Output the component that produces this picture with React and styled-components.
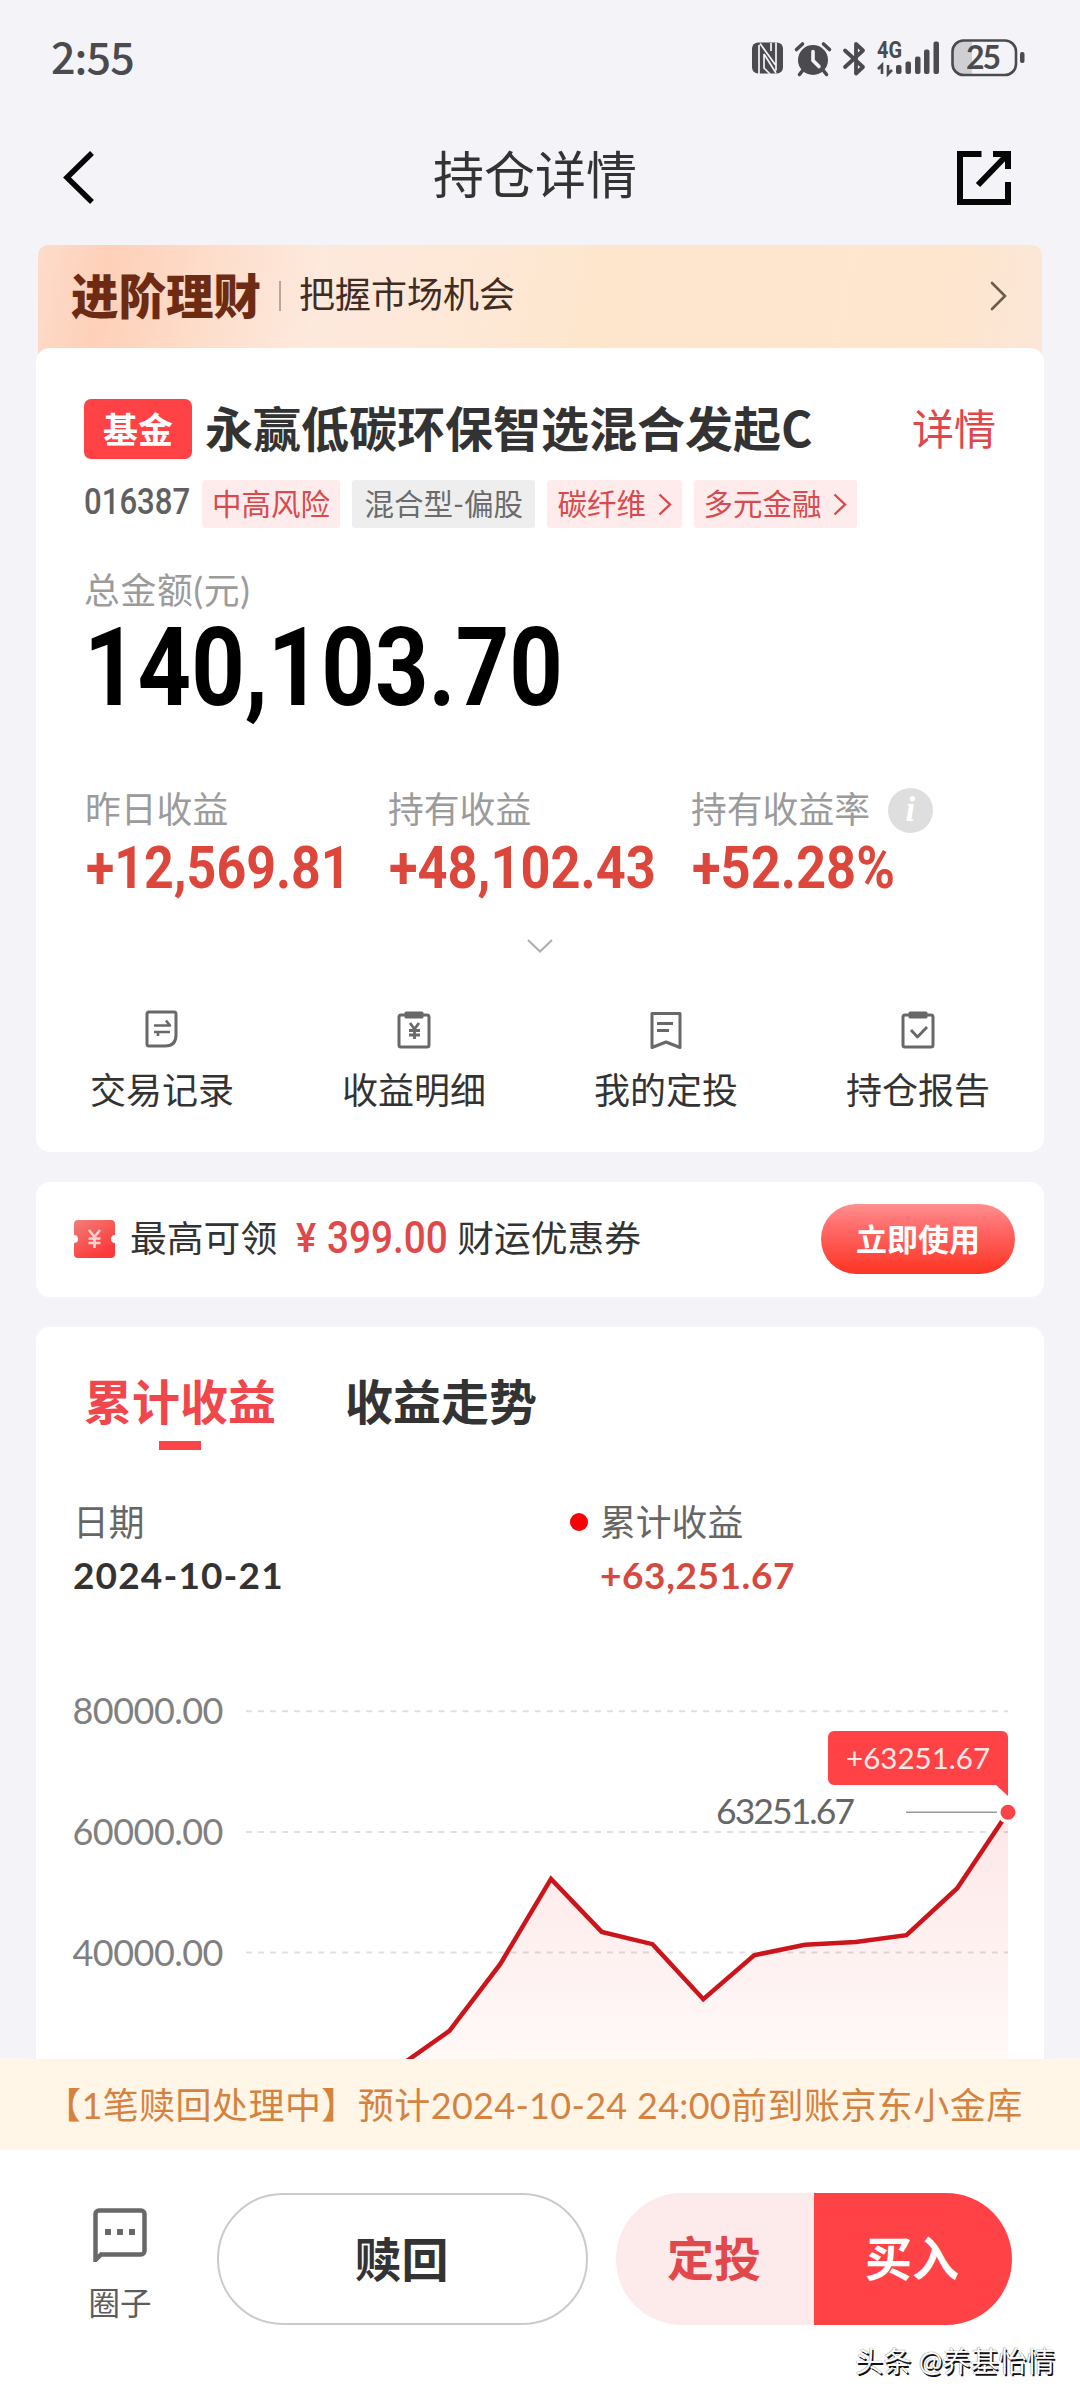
import React from "react";
import styled, { createGlobalStyle } from "styled-components";

const GlobalStyle = createGlobalStyle`
    * {
        box-sizing: border-box;
    }
    body {
        margin: 0;
        background-color: #f4f4f8;
        font-family: Lato, "Noto Sans CJK SC", sans-serif;
        color: #333;
    }
    svg {
        display: block;
        flex-shrink: 0;
    }
`

const Page = styled.main`
    display: flex;
    flex-direction: column;
    width: 1080px;
    height: 2400px;
    overflow: hidden;
`

const StatusBar = styled.div`
    display: flex;
    align-items: center;
    justify-content: space-between;
    height: 116px;
    padding: 0 55px 0 51px;
`

const Clock = styled.span`
    padding-bottom: 6px;
    font-family: "Noto Sans CJK SC", sans-serif;
    font-size: 43px;
    font-weight: 500;
    line-height: 50px;
    letter-spacing: -0.9px;
    color: #4b4b4f;
`

const NavBar = styled.header`
    display: flex;
    align-items: center;
    justify-content: space-between;
    height: 124px;
    margin-bottom: 5px;
    padding: 0 69px 0 63px;
`

const NavTitle = styled.h1`
    margin: 0 0 7px;
    font-size: 51px;
    font-weight: 400;
    line-height: 60px;
`

const Banner = styled.section`
    display: flex;
    align-items: center;
    height: 115px;
    margin: 0 38px -12px;
    padding: 0 35px 14px 33px;
    border-radius: 10px 10px 0 0;
    background: linear-gradient(100deg, #fddccb 0%, #fed0b8 7%, #fdddca 17%, #fde9dd 28%, #fde8d6 44%, #fee6cd 55%, #fde5cf 92%, #fbe7d8 100%);
`

const BannerLogo = styled.strong`
    font-size: 47.5px;
    font-weight: 900;
    line-height: 60px;
    color: #6d2b14;
`

const BannerDivider = styled.i`
    width: 2px;
    height: 30px;
    margin: 0 18px 0 18px;
    background-color: #bda496;
`

const BannerText = styled.span`
    flex: 1;
    padding-bottom: 3px;
    font-size: 36px;
    line-height: 50px;
    color: #3f2d24;
`

const Card = styled.section`
    flex-shrink: 0;
    margin: 0 36px;
    border-radius: 14px;
    background-color: #fff;
`

const FundCard = styled(Card)`
    height: 804px;
    padding-top: 51px;
`

const FundBody = styled.div`
    padding: 0 48px;
`

const TitleRow = styled.div`
    display: flex;
    align-items: center;
    height: 60px;
`

const FundBadge = styled.span`
    width: 108px;
    height: 60px;
    margin-right: 13px;
    border-radius: 7px;
    background-color: #ff4245;
    font-size: 35px;
    font-weight: 700;
    line-height: 60px;
    text-align: center;
    color: #fff;
`

const FundName = styled.h2`
    flex: 1;
    margin: 0;
    font-family: "Noto Sans CJK SC", sans-serif;
    font-size: 48px;
    font-weight: 700;
    line-height: 56px;
    padding-bottom: 7px;
`

const DetailLink = styled.a`
    font-size: 42px;
    line-height: 50px;
    color: #e0474c;
`

const TagRow = styled.div`
    display: flex;
    gap: 12px;
    margin-top: 21px;
`

/* DIN-like figures: Roboto squeezed horizontally inside a fixed width box */
const Figure = styled.span`
    display: block;
    width: ${(props) => props.$width}px;
    font-family: Roboto, sans-serif;
    font-size: ${(props) => props.$size}px;
    font-weight: ${(props) => props.$weight || 700};
    line-height: ${(props) => props.$line}px;
    color: ${(props) => props.$color};
    white-space: nowrap;
    transform: scaleX(${(props) => props.$squeeze});
    transform-origin: left center;
`

const StatFigure = styled(Figure)`
    margin-left: 2px;
`

const Tag = styled.span`
    display: flex;
    align-items: center;
    gap: 11.5px;
    height: 48px;
    padding: 0 ${(props) => (props.$gray ? 12.5 : 10)}px;
    border-radius: 3px;
    background-color: ${(props) => (props.$gray ? "#eeeeee" : "#feecec")};
    font-size: 29.5px;
    line-height: 45px;
    color: ${(props) => (props.$gray ? "#6b6b6b" : "#d9494d")};
`

const TagText = styled.span`
    padding-bottom: 2px;
`

const Label = styled.span`
    font-size: 35.8px;
    line-height: ${(props) => props.$line || 46}px;
    letter-spacing: ${(props) => props.$spacing || 0}px;
    color: ${(props) => props.$color || "#9b9b9b"};
`

const TotalLabel = styled.div`
    display: flex;
    margin: 38px 0 2px;
`

const Stats = styled.div`
    display: flex;
    margin-top: 69px;
`

const Stat = styled.div`
    width: 303px;
    flex-shrink: 0;
`

const StatHead = styled.div`
    display: flex;
    align-items: center;
    gap: 18px;
    height: 46px;
    margin-bottom: 5px;
    padding-left: 1px;
`

const Info = styled.span`
    width: 45px;
    height: 45px;
    border-radius: 50%;
    background-color: #dedede;
    font-family: "Liberation Serif", serif;
    font-size: 35px;
    font-style: italic;
    font-weight: 700;
    line-height: 43px;
    text-align: center;
    color: #fff;
`

const Expand = styled.div`
    display: flex;
    justify-content: center;
    margin: 41px 0 57px;
`

const Shortcuts = styled.nav`
    display: flex;
`

const Shortcut = styled.a`
    display: flex;
    flex: 1;
    flex-direction: column;
    align-items: center;
    gap: 18px;
    font-size: 36px;
    line-height: 46px;
`

const CouponCard = styled(Card)`
    display: flex;
    align-items: center;
    height: 115px;
    margin-top: 30px;
    padding: 0 29px 1px 38px;
    font-size: 36.8px;
    line-height: 50px;
`

const CouponText = styled.span`
    margin-left: ${(props) => props.$left}px;
    padding-bottom: 2px;
`

const CouponAmount = styled.div`
    display: flex;
    gap: 8px;
    margin-left: 19px;
`

const UseButton = styled.button`
    width: 194px;
    height: 70px;
    margin-left: auto;
    padding: 0;
    border: none;
    border-radius: 35px;
    background: linear-gradient(#ff8f90 0%, #ff6461 40%, #fd3b2c 90%, #f8382b 100%);
    font-family: inherit;
    font-size: 31px;
    font-weight: 700;
    line-height: 66px;
    color: #fff;
`

const ChartCard = styled(Card)`
    flex: 1 0 0;
    min-height: 0;
    margin-top: 30px;
    padding-top: 45px;
    border-radius: 14px 14px 0 0;
    overflow: hidden;
`

const Tabs = styled.div`
    display: flex;
    gap: 69px;
    padding-left: 48px;
`

const Tab = styled.div`
    display: flex;
    flex-direction: column;
    align-items: center;
    height: 78px;
    font-size: 48px;
    font-weight: 700;
    line-height: 60px;
    color: ${(props) => (props.$active ? "#ef474b" : "#333")};

    &::after {
        content: "";
        width: 42px;
        height: 9px;
        margin-top: 9px;
        background-color: ${(props) => (props.$active ? "#fb4548" : "transparent")};
    }
`

const Legend = styled.div`
    display: flex;
    margin-top: 50px;
    padding-left: 37px;
`

const LegendItem = styled.div`
    display: flex;
    flex-direction: column;
    gap: 7px;
    width: ${(props) => props.$width}px;
`

const LegendDot = styled.i`
    width: 18px;
    height: 18px;
    margin: 13px 12px 0 0;
    border-radius: 50%;
    background-color: #f90207;
`

const LegendValue = styled.strong`
    font-size: 37px;
    line-height: 43px;
    letter-spacing: ${(props) => props.$spacing}px;
    color: ${(props) => props.$color || "#333"};
`

const ChartArea = styled.svg`
    margin-top: 44px;
`

const Notice = styled.div`
    flex-shrink: 0;
    height: 91px;
    padding-left: 45px;
    background-color: #fff6e8;
    font-size: 36px;
    line-height: 93px;
    letter-spacing: 0.45px;
    white-space: nowrap;
    color: #d6823f;
`

const NoticeNumber = styled.span`
    letter-spacing: 0.3px;
`

const BottomBar = styled.footer`
    display: flex;
    flex-direction: column;
    flex-shrink: 0;
    height: 250px;
    background-color: #fff;
`

const Actions = styled.div`
    display: flex;
    padding: 43px 68px 0 66px;
`

const Circle = styled.a`
    display: flex;
    flex-direction: column;
    align-items: center;
    gap: 21px;
    width: 108px;
    margin-right: 43px;
    padding-top: 15px;
    font-size: 31.5px;
    line-height: 40px;
    color: #5c5c5c;
`

const Action = styled.button`
    width: ${(props) => props.$width}px;
    height: 132px;
    padding: 0 2px ${(props) => (props.$outline ? 5 : 8)}px 0;
    border: ${(props) => (props.$outline ? "2px solid #cbcbcb" : "none")};
    border-radius: ${(props) => props.$radius};
    background-color: ${(props) => props.$bg};
    font-family: inherit;
    font-size: 47px;
    font-weight: 700;
    color: ${(props) => props.$color};
`

const TradeGroup = styled.div`
    display: flex;
    margin-left: auto;
`

const Author = styled.span`
    align-self: flex-end;
    margin: 16px 25px 0 0;
    font-size: 28.2px;
    line-height: 40px;
    color: #fff;
    text-shadow: 1.5px 1.5px 0 #111, 0 0 1px #333;
`

const GRID = [80000, 60000, 40000]
const PROFITS = [
    21060, 27000, 38060, 52200, 43420, 41380, 32260,
    39550, 41290, 41760, 42870, 50660, 63251.67,
]
const RIGHT = 972
const STEP = 50.78

const toY = (value) => 312.5 - (value - 40000) * 0.00603
const toX = (index) => RIGHT - (PROFITS.length - 1 - index) * STEP

function StatusIcons() {
    return (
        <svg width="273" height="50" viewBox="0 -6 273 50" fill="#4b4b4f">
            {/* nfc */}
            <rect x="0" y="3.500" width="31" height="31" rx="6" />
            <path d="M7 6v29M8 4.500L23.500 26M24 3.500v28M12 15v14l6 6M12 15L24 34M19 4v8" fill="none" stroke="#f4f4f8" strokeWidth="1.700" />
            {/* alarm */}
            <circle cx="61" cy="21" r="15" />
            <path d="M44.500 10.500l6-5.500M77.500 10.500l-6-5.500M51 31l-3.500 4.500M71 31l3.500 4.500" stroke="#4b4b4f" strokeWidth="3.600" strokeLinecap="round" />
            <path d="M61 12.500v9l6 6" fill="none" stroke="#f4f4f8" strokeWidth="3.600" strokeLinecap="round" />
            {/* bluetooth */}
            <path d="M93 11.500L111 28l-7 6.500V5l7 6.500L93 28" fill="none" stroke="#4b4b4f" strokeWidth="3.800" strokeLinecap="round" strokeLinejoin="round" />
            {/* signal */}
            <text x="125" y="19" fontFamily="Roboto" fontSize="23" fontWeight="700" textLength="25" lengthAdjust="spacingAndGlyphs">4G</text>
            <path d="M130 35v-9l-4 4M136 26v9l4-4" fill="none" stroke="#4b4b4f" strokeWidth="2.600" />
            <rect x="144" y="26" width="5.500" height="9" rx="2" />
            <rect x="153.500" y="22.500" width="5.500" height="12.500" rx="2" />
            <rect x="163" y="17.500" width="5.500" height="17.500" rx="2" />
            <rect x="172" y="10.500" width="5.500" height="24.500" rx="2" />
            <rect x="181.500" y="2.500" width="5.500" height="32.500" rx="2" />
            {/* battery */}
            <path d="M220 2.500h-9a10 10 0 0 0-10 10v13a10 10 0 0 0 10 10h9z" fill="#cfcfd3" />
            <rect x="200.500" y="1.500" width="63.500" height="34.500" rx="11" fill="none" stroke="#4b4b4f" strokeWidth="2.600" />
            <rect x="268" y="13" width="4.500" height="11" rx="2" />
            <text x="214" y="30" fontFamily="Lato" fontSize="32" fontWeight="700" textLength="35">25</text>
        </svg>
    )
}

function ShortcutIcon({ children }) {
    return (
        <svg width="38" height="39" viewBox="0 0 38 39" fill="none" stroke="#686868" strokeWidth="3" strokeLinejoin="round">
            {children}
        </svg>
    )
}

function TagArrow() {
    return (
        <svg width="14" height="24" viewBox="0 0 14 24">
            <path d="M1.500 2.500L12 12.500L1.500 22.500" fill="none" stroke="#d9494d" strokeWidth="2.400" />
        </svg>
    )
}

function ProfitChart() {
    const points = PROFITS.map((value, i) => `${toX(i)},${toY(value)}`)
    const lastY = toY(PROFITS[PROFITS.length - 1])

    return (
        <ChartArea width="1008" height="419" viewBox="0 0 1008 419" fontFamily="Lato">
            <defs>
                <linearGradient id="profitFill" gradientUnits="userSpaceOnUse" x1="0" y1="172" x2="0" y2="440">
                    <stop offset="0" stopColor="#fde7e7" />
                    <stop offset="1" stopColor="#fffaf9" />
                </linearGradient>
            </defs>
            <polygon points={`${toX(0)},430 ${points.join(" ")} ${RIGHT},430`} fill="url(#profitFill)" />
            {GRID.map((value) => (
                <g key={value}>
                    <text x="36.500" y={toY(value) + 13} fontSize="36" fill="#808080" textLength="151">{value.toFixed(2)}</text>
                    <line x1="210" x2={RIGHT} y1={toY(value)} y2={toY(value)} stroke="#000" strokeOpacity="0.120" strokeWidth="2" strokeDasharray="6 6.030" />
                </g>
            ))}
            <polyline points={points.join(" ")} fill="none" stroke="#cb151b" strokeWidth="4.500" />
            <text x="680" y="184" fontSize="35.500" fill="#666" textLength="139">63251.67</text>
            <line x1="870" x2="961" y1={lastY} y2={lastY} stroke="#9a9a9a" strokeWidth="1.600" />
            <circle cx={RIGHT} cy={lastY} r="11" fill="#fff" />
            <circle cx={RIGHT} cy={lastY} r="7.500" fill="#f94448" />
            <path d="M798 91h168a6 6 0 0 1 6 6v59l-12-11H798a6 6 0 0 1-6-6V97a6 6 0 0 1 6-6z" fill="#ff4245" />
            <text x="810" y="128.500" fontSize="29.500" fill="#ffe9e6" textLength="144">+63251.67</text>
        </ChartArea>
    )
}

export default function App() {
    return (
        <Page>
            <GlobalStyle />
            <StatusBar>
                <Clock>2:55</Clock>
                <StatusIcons />
            </StatusBar>

            <NavBar>
                <svg width="50" height="54" viewBox="0 0 50 54">
                    <path d="M29 2L4 26.500L29 51" fill="none" stroke="#060606" strokeWidth="5.500" />
                </svg>
                <NavTitle>持仓详情</NavTitle>
                <svg width="54" height="54" viewBox="0 0 54 54" fill="none" stroke="#060606" strokeWidth="6">
                    <path d="M24.500 3H3v48h48V31M36 3h15v15M50 4L21 34" />
                </svg>
            </NavBar>

            <Banner>
                <BannerLogo>进阶理财</BannerLogo>
                <BannerDivider />
                <BannerText>把握市场机会</BannerText>
                <svg width="17" height="30" viewBox="0 0 17 30">
                    <path d="M2 2L15 15L2 28" fill="none" stroke="#71594b" strokeWidth="2.600" strokeLinecap="round" />
                </svg>
            </Banner>

            <FundCard>
                <FundBody>
                    <TitleRow>
                        <FundBadge>基金</FundBadge>
                        <FundName>永赢低碳环保智选混合发起C</FundName>
                        <DetailLink>详情</DetailLink>
                    </TitleRow>
                    <TagRow>
                        <Figure $width={106} $size={36} $weight={500} $line={44} $squeeze={0.865} $color="#606060">016387</Figure>
                        <Tag><TagText>中高风险</TagText></Tag>
                        <Tag $gray><TagText>混合型-偏股</TagText></Tag>
                        <Tag><TagText>碳纤维</TagText><TagArrow /></Tag>
                        <Tag><TagText>多元金融</TagText><TagArrow /></Tag>
                    </TagRow>
                    <TotalLabel>
                        <Label $line={50} $spacing={0.7}>总金额(元)</Label>
                    </TotalLabel>
                    <Figure $width={560} $size={109} $line={100} $squeeze={0.857} $color="#000">140,103.70</Figure>
                    <Stats>
                        <Stat>
                            <StatHead><Label>昨日收益</Label></StatHead>
                            <StatFigure $width={300} $size={60} $line={60} $squeeze={0.865} $color="#dc463b">+12,569.81</StatFigure>
                        </Stat>
                        <Stat>
                            <StatHead><Label>持有收益</Label></StatHead>
                            <StatFigure $width={300} $size={60} $line={60} $squeeze={0.872} $color="#dc463b">+48,102.43</StatFigure>
                        </Stat>
                        <Stat>
                            <StatHead><Label>持有收益率</Label><Info>i</Info></StatHead>
                            <StatFigure $width={300} $size={60} $line={60} $squeeze={0.874} $color="#dc463b">+52.28%</StatFigure>
                        </Stat>
                    </Stats>
                </FundBody>
                <Expand>
                    <svg width="26" height="14" viewBox="0 0 26 14">
                        <path d="M1 1L13 12.500L25 1" fill="none" stroke="#b0b0b0" strokeWidth="2.200" />
                    </svg>
                </Expand>
                <Shortcuts>
                    <Shortcut>
                        <ShortcutIcon>
                            <path d="M6 2h25a2 2 0 0 1 2 2v21q0 11-11 11H6a2 2 0 0 1-2-2V4a2 2 0 0 1 2-2z" />
                            <path d="M11 15.500h16l-4-5M27 22H11M11 22h4v4" strokeWidth="2.600" />
                        </ShortcutIcon>
                        交易记录
                    </Shortcut>
                    <Shortcut>
                        <ShortcutIcon>
                            <rect x="4" y="5" width="30" height="32" rx="2" />
                            <path d="M11 3h16v4H11z" />
                            <path d="M15 13l4.500 6l4.500-6M14 20.500h11M14 25h11M19.500 19v10" strokeWidth="2.800" />
                        </ShortcutIcon>
                        收益明细
                    </Shortcut>
                    <Shortcut>
                        <ShortcutIcon>
                            <path d="M5 3.500h28v34l-14-5.500L5 37.500z" />
                            <path d="M10 13.500h16M10 20.500h12" strokeWidth="2.800" />
                        </ShortcutIcon>
                        我的定投
                    </Shortcut>
                    <Shortcut>
                        <ShortcutIcon>
                            <rect x="4" y="5" width="30" height="32" rx="2" />
                            <path d="M11 3h16v4H11z" />
                            <path d="M12 20l6.500 7L28 17" strokeWidth="2.800" />
                        </ShortcutIcon>
                        持仓报告
                    </Shortcut>
                </Shortcuts>
            </FundCard>

            <CouponCard>
                <svg width="41" height="38" viewBox="0 0 41 38">
                    <defs>
                        <linearGradient id="ticket" x1="0" y1="0" x2="0.600" y2="1">
                            <stop offset="0" stopColor="#f37d78" />
                            <stop offset="1" stopColor="#fb3838" />
                        </linearGradient>
                    </defs>
                    <path d="M4 0h33a4 4 0 0 1 4 4v11a4 4 0 0 0 0 8v11a4 4 0 0 1-4 4H4a4 4 0 0 1-4-4V23a4 4 0 0 0 0-8V4a4 4 0 0 1 4-4z" fill="url(#ticket)" />
                    <path d="M15 10l5.500 7l5.500-7M14.500 18.500h12M14.500 23h12M20.500 17v11" fill="none" stroke="#ffd5d2" strokeWidth="2.600" />
                </svg>
                <CouponText $left={15}>最高可领</CouponText>
                <CouponAmount>
                    <Figure $width={23} $size={40} $weight={500} $line={50} $squeeze={0.95} $color="#e0484a">¥</Figure>
                    <Figure $width={119} $size={43.5} $weight={500} $line={50} $squeeze={0.89} $color="#e0484a">399.00</Figure>
                </CouponAmount>
                <CouponText $left={11}>财运优惠券</CouponText>
                <UseButton>立即使用</UseButton>
            </CouponCard>

            <ChartCard>
                <Tabs>
                    <Tab $active>累计收益</Tab>
                    <Tab>收益走势</Tab>
                </Tabs>
                <Legend>
                    <LegendItem $width={497}>
                        <Label $color="#666">日期</Label>
                        <LegendValue $spacing={1.15}>2024-10-21</LegendValue>
                    </LegendItem>
                    <LegendDot />
                    <LegendItem>
                        <Label $color="#666">累计收益</Label>
                        <LegendValue $spacing={0.6} $color="#d5493f">+63,251.67</LegendValue>
                    </LegendItem>
                </Legend>
                <ProfitChart />
            </ChartCard>

            <Notice>
                【<NoticeNumber>1</NoticeNumber>笔赎回处理中】预计<NoticeNumber>2024-10-24 24:00</NoticeNumber>前到账京东小金库
            </Notice>

            <BottomBar>
                <Actions>
                    <Circle>
                        <svg width="54" height="54" viewBox="0 0 54 54">
                            <path d="M6 2.500h42a3.500 3.500 0 0 1 3.500 3.500v37a3.500 3.500 0 0 1-3.500 3.500H8L2.500 52V6A3.500 3.500 0 0 1 6 2.500z" fill="none" stroke="#686868" strokeWidth="4.500" />
                            <path d="M12 21h6v6h-6zM24 21h6v6h-6zM36 21h6v6h-6z" fill="#686868" />
                        </svg>
                        圈子
                    </Circle>
                    <Action $width={371} $outline $radius="66px" $bg="#fff" $color="#333">赎回</Action>
                    <TradeGroup>
                        <Action $width={198} $radius="66px 0 0 66px" $bg="#fdeaea" $color="#e2474c">定投</Action>
                        <Action $width={198} $radius="0 66px 66px 0" $bg="#ff4245" $color="#fff">买入</Action>
                    </TradeGroup>
                </Actions>
                <Author>头条 @养基怡情</Author>
            </BottomBar>
        </Page>
    )
}
